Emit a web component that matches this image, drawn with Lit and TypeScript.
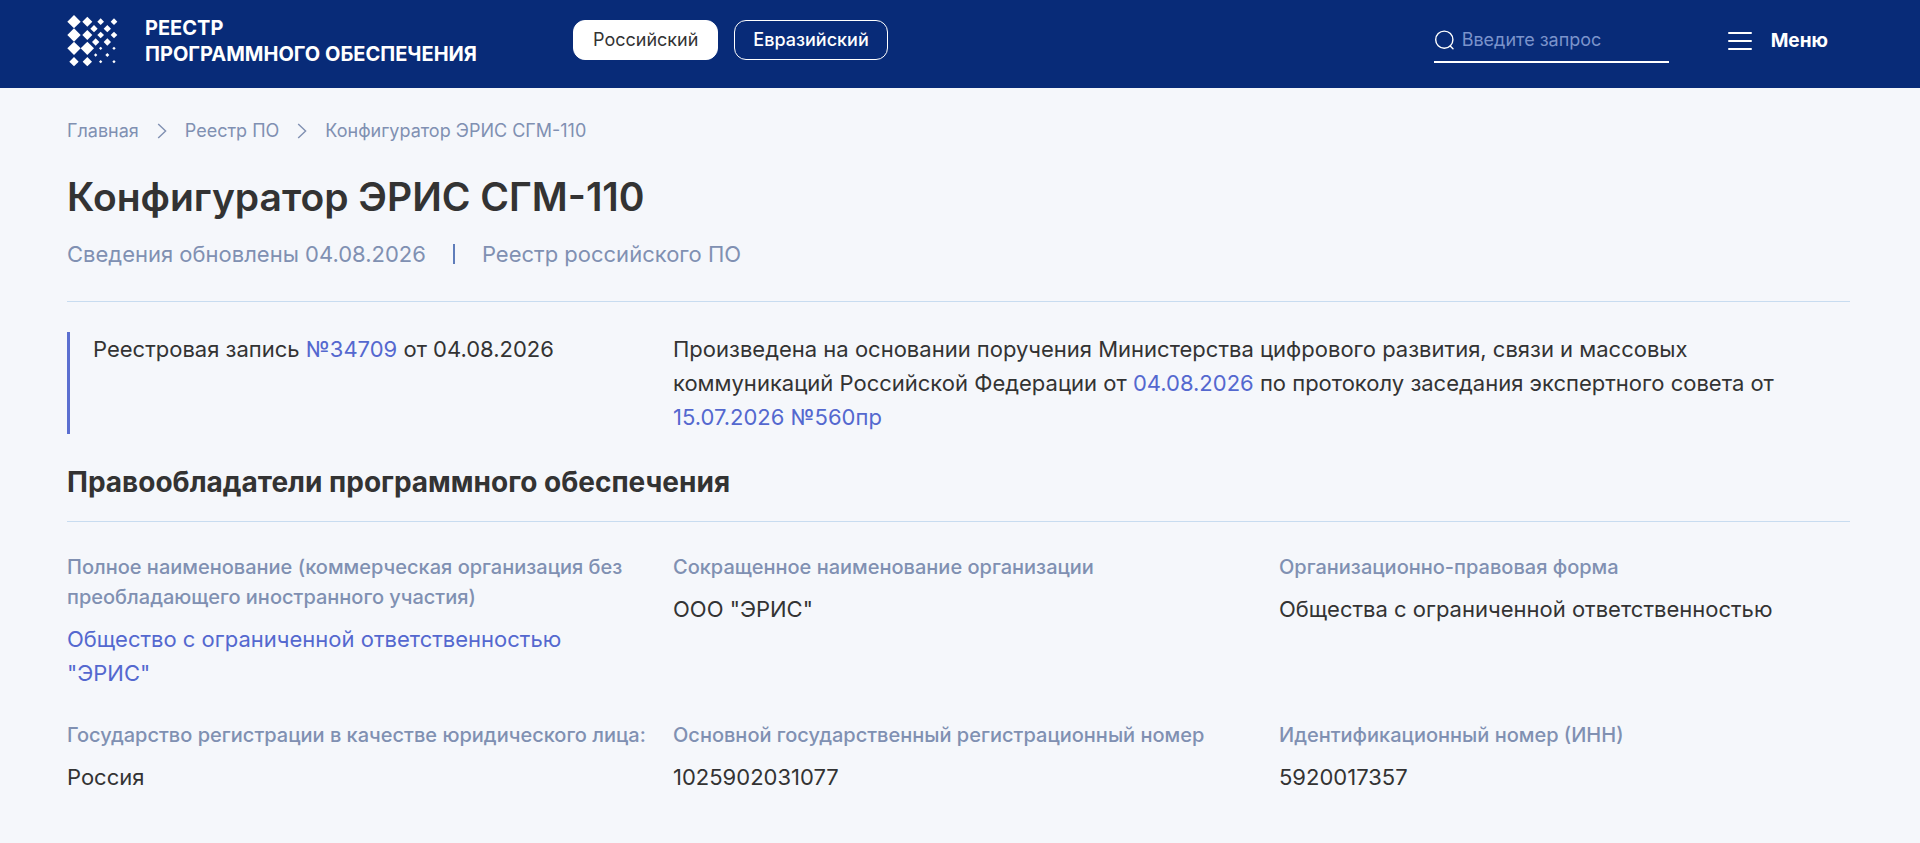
import { LitElement, html, css, svg } from "lit";
import { customElement, property, state } from "lit/decorators.js";
import { classMap } from "lit/directives/class-map.js";

interface Field {
  label: string;
  value: string;
  href?: string;
}

const HOLDER_FIELDS: Field[] = [
  {
    label: "Полное наименование (коммерческая организация без преобладающего иностранного участия)",
    value: 'Общество с ограниченной ответственностью "ЭРИС"',
    href: "#holder",
  },
  { label: "Сокращенное наименование организации", value: 'ООО "ЭРИС"' },
  { label: "Организационно-правовая форма", value: "Общества с ограниченной ответственностью" },
  { label: "Государство регистрации в качестве юридического лица:", value: "Россия" },
  { label: "Основной государственный регистрационный номер", value: "1025902031077" },
  { label: "Идентификационный номер (ИНН)", value: "5920017357" },
];

// Diamonds of the logo: centre x, centre y, half-diagonal.
const DIAMONDS: [number, number, number][] = [
  [20, 20, 20], [60, 20, 15], [100, 20, 10], [140, 20, 10],
  [80, 41, 11], [120, 41, 11],
  [20, 60, 20], [60, 60, 15], [100, 60, 10], [140, 60, 10],
  [85, 81, 11], [120, 81, 11],
  [20, 100, 20], [60, 100, 20], [100, 100, 5], [140, 100, 5],
  [85, 120, 5], [120, 120, 6],
  [20, 140, 14], [60, 140, 14], [100, 140, 5], [140, 140, 5],
];

@customElement("registry-header")
export class RegistryHeader extends LitElement {
  static styles = css`
    :host {
      display: block;
      background: #082b78;
      color: #fff;
    }
    .bar {
      display: flex;
      align-items: flex-start;
      height: 88px;
      padding: 0 92px 0 67px;
      box-sizing: border-box;
    }
    .brand {
      display: flex;
      align-items: flex-start;
      gap: 26px;
      padding-top: 15px;
      color: inherit;
      text-decoration: none;
    }
    .logo {
      display: block;
      width: 52px;
      height: 52px;
      flex: none;
    }
    .name {
      font-size: 20px;
      line-height: 26px;
      font-weight: 700;
      white-space: nowrap;
    }
    .tabs {
      display: flex;
      gap: 16px;
      margin-left: 96px;
      padding-top: 20px;
    }
    .tab {
      height: 40px;
      padding: 0 18px;
      border: 1px solid #fff;
      border-radius: 12px;
      background: transparent;
      color: #fff;
      font: 500 18px/24px Inter, "Open Sans", sans-serif;
      cursor: pointer;
    }
    .active {
      padding: 0 19px;
      background: #fff;
      color: #333;
      font-weight: 400;
    }
    .search {
      display: flex;
      align-items: center;
      gap: 8px;
      width: 235px;
      height: 44px;
      margin-left: auto;
      margin-top: 19px;
      box-sizing: border-box;
      border-bottom: 2px solid #fff;
    }
    .glass {
      flex: none;
      width: 20px;
      height: 20px;
    }
    .query {
      flex: 1;
      min-width: 0;
      padding: 0;
      border: 0;
      outline: 0;
      background: transparent;
      color: #fff;
      font: 400 18px/24px Inter, "Open Sans", sans-serif;
    }
    .query::placeholder {
      color: #7b93cb;
      opacity: 1;
    }
    .menu {
      display: flex;
      align-items: center;
      gap: 19px;
      margin-left: 59px;
      margin-top: 27px;
      padding: 0;
      border: 0;
      background: transparent;
      color: #fff;
      font: 700 19px/28px Inter, "Open Sans", sans-serif;
      cursor: pointer;
    }
    .burger {
      width: 24px;
      height: 20px;
    }
  `;

  @property({ type: Array }) registries: string[] = ["Российский", "Евразийский"];
  @state() private active = 0;

  render() {
    return html`
      <header class="bar">
        <a class="brand" href="#home">
          <svg class="logo" viewBox="0 0 156 156" fill="#fff" aria-hidden="true">
            ${DIAMONDS.map(
              ([x, y, r]) => svg`<path d="M${x + 1} ${y - r}L${x + r + 1} ${y}L${x + 1} ${y + r}L${x - r + 1} ${y}Z" />`,
            )}
          </svg>
          <span class="name">РЕЕСТР<br />ПРОГРАММНОГО ОБЕСПЕЧЕНИЯ</span>
        </a>
        <nav class="tabs">
          ${this.registries.map(
            (name, i) => html`
              <button
                type="button"
                class=${classMap({ tab: true, active: i === this.active })}
                @click=${() => (this.active = i)}
              >${name}</button>
            `,
          )}
        </nav>
        <label class="search">
          <svg class="glass" viewBox="0 0 20 20" fill="none" stroke="#fff" stroke-width="1.4" stroke-linecap="round" aria-hidden="true">
            <circle cx="10.3" cy="9.7" r="8.6" />
            <path d="M16.2 16L19 18.8" />
          </svg>
          <input class="query" type="search" placeholder="Введите запрос" aria-label="Введите запрос" />
        </label>
        <button type="button" class="menu">
          <svg class="burger" viewBox="0 0 24 20" fill="none" stroke="#fff" stroke-width="2" stroke-linecap="round" aria-hidden="true">
            <path d="M1 2H23M1 10H23M1 18H23" />
          </svg>
          Меню
        </button>
      </header>
    `;
  }
}

@customElement("registry-field")
export class RegistryField extends LitElement {
  static styles = css`
    :host {
      display: block;
    }
    .label {
      margin: 0 0 10px;
      padding-right: 20px;
      color: #8090b2;
      font-size: 20px;
      line-height: 30px;
      font-weight: 500;
    }
    .value {
      margin: 0;
      padding-right: 35px;
      color: #333;
      font-size: 22px;
      line-height: 34px;
    }
    .link {
      color: #5468cf;
      text-decoration: none;
    }
  `;

  @property({ attribute: false }) field!: Field;

  render() {
    const { label, value, href } = this.field;
    return html`
      <p class="label">${label}</p>
      <p class="value">${href ? html`<a class="link" href=${href}>${value}</a>` : value}</p>
    `;
  }
}

@customElement("app-root")
export class AppRoot extends LitElement {
  static styles = css`
    :host {
      display: block;
      min-height: 100vh;
      background: #f5f7fb;
      color: #333;
      font-family: Inter, "Open Sans", sans-serif;
    }
    .page {
      padding: 29px 70px 44px 67px;
    }
    .crumbs {
      display: flex;
      align-items: center;
      gap: 18px;
      color: #8090b2;
      font-size: 18px;
      line-height: 28px;
    }
    .crumb {
      color: inherit;
      text-decoration: none;
    }
    .chevron {
      width: 10px;
      height: 16px;
    }
    .title {
      margin: 27px 0 0;
      font-size: 39px;
      line-height: 50px;
      font-weight: 600;
    }
    .meta {
      display: flex;
      align-items: center;
      gap: 27px;
      margin-top: 15px;
      padding-bottom: 30px;
      border-bottom: 1px solid #c8dcf0;
      color: #8090b2;
      font-size: 22px;
      line-height: 34px;
    }
    .divider {
      width: 2px;
      height: 20px;
      background: #5f7dba;
    }
    /* The gutter lies inside each column, so the last one reaches past the page edge. */
    .grid {
      display: grid;
      grid-template-columns: repeat(3, minmax(0, 1fr));
      margin-right: -35px;
    }
    .record {
      margin-top: 30px;
      font-size: 22px;
      line-height: 34px;
    }
    .entry {
      padding-left: 23px;
      border-left: 3px solid #5b6fd0;
    }
    .basis {
      grid-column: span 2;
      padding-right: 35px;
    }
    .text {
      margin: 0;
    }
    .link {
      color: #5468cf;
      text-decoration: none;
    }
    .protocol {
      white-space: nowrap;
    }
    .heading {
      margin: 30px 0 0;
      padding-bottom: 21px;
      border-bottom: 1px solid #c8dcf0;
      font-size: 28px;
      line-height: 36px;
      font-weight: 700;
    }
    .fields {
      margin-top: 30px;
      row-gap: 30px;
    }
  `;

  private chevron() {
    return html`
      <svg class="chevron" viewBox="0 0 10 16" fill="none" stroke="#8090b2" stroke-width="1.4" aria-hidden="true">
        <path d="M1.2 1L8.6 8L1.2 15" />
      </svg>
    `;
  }

  render() {
    return html`
      <registry-header></registry-header>
      <main class="page">
        <nav class="crumbs">
          <a class="crumb" href="#home">Главная</a>
          ${this.chevron()}
          <a class="crumb" href="#registry">Реестр ПО</a>
          ${this.chevron()}
          <span>Конфигуратор ЭРИС СГМ-110</span>
        </nav>
        <h1 class="title">Конфигуратор ЭРИС СГМ-110</h1>
        <div class="meta">
          <span>Сведения обновлены 04.08.2026</span>
          <span class="divider"></span>
          <span>Реестр российского ПО</span>
        </div>
        <section class="grid record">
          <div class="entry">
            <p class="text">Реестровая запись <a class="link" href="#record">№34709</a> от 04.08.2026</p>
          </div>
          <div class="basis">
            <p class="text">
              Произведена на основании поручения Министерства цифрового развития, связи и массовых
              коммуникаций Российской Федерации от <a class="link" href="#order">04.08.2026</a> по
              протоколу заседания экспертного совета от
              <a class="link protocol" href="#protocol">15.07.2026 №560пр</a>
            </p>
          </div>
        </section>
        <h2 class="heading">Правообладатели программного обеспечения</h2>
        <section class="grid fields">
          ${HOLDER_FIELDS.map((f) => html`<registry-field .field=${f}></registry-field>`)}
        </section>
      </main>
    `;
  }
}
